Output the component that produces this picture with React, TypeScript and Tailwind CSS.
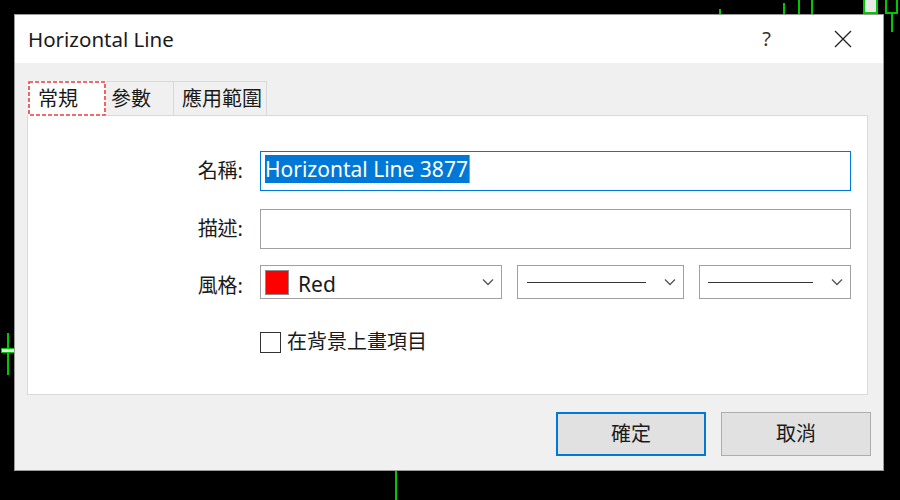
const Chevron = () => (
	<svg width="12" height="8" viewBox="0 0 12 8" className="shrink-0">
		<polyline points="1,1.5 6,6.5 11,1.5" fill="none" stroke="#555" strokeWidth="1.3" />
	</svg>
);

const ChartMarks = () => (
	<>
		{/* top strip */}
		<div className="absolute left-[719px] top-[9px] w-[2px] h-[6px] bg-[#00c800]" />
		<div className="absolute left-[783px] top-[3px] w-[2px] h-[12px] bg-[#00c800]" />
		<div className="absolute left-[798px] top-0 w-[2px] h-[15px] bg-[#00c800]" />
		<div className="absolute left-[811px] top-0 w-[2px] h-[15px] bg-[#00c800]" />
		<div className="absolute left-[863px] top-0 w-[15px] h-[14px] bg-[#e8e8e8] border-2 border-t-0 border-[#00c800]" />
		<div className="absolute left-[885px] top-0 w-[13px] h-[14px] border-2 border-t-0 border-[#00c800]" />
		<div className="absolute left-[891px] top-[13px] w-[2px] h-[19px] bg-[#00c800]" />
		{/* left crosshair */}
		<div className="absolute left-[7px] top-[333px] w-[2px] h-[42px] bg-[#00c800]" />
		<div className="absolute left-[1px] top-[348px] w-[15px] h-[5px] bg-[#e8e8e8] border border-[#00c800]" />
		{/* bottom */}
		<div className="absolute left-[395px] top-[469px] w-[2px] h-[31px] bg-[#00c800]" />
	</>
);

const tabs = [
	{ label: "參數", w: "w-[69px]", pl: "pl-[5px]" },
	{ label: "應用範圍", w: "w-[94px]", pl: "pl-[8px]" },
];

export default function App() {
	return (
		<div className="relative w-[900px] h-[500px] bg-black overflow-hidden font-['Noto_Sans','Noto_Sans_CJK_TC',sans-serif] text-[#1a1a1a]">
			<ChartMarks />

			{/* dialog window */}
			<div className="absolute left-[14px] top-[14px] w-[870px] h-[457px] border border-[#9a9a9a] bg-[#f0f0f0] flex flex-col">
				{/* title bar */}
				<div className="h-[48px] bg-white flex items-center shrink-0">
					<span className="ml-[13px] text-[20.5px] leading-none">Horizontal Line</span>
					<span className="ml-auto mr-[63px] text-[20px] leading-none text-[#333]">?</span>
					<svg width="18" height="18" viewBox="0 0 18 18" className="mr-[31px]">
						<path d="M1 1 L17 17 M17 1 L1 17" stroke="#222" strokeWidth="1.3" />
					</svg>
				</div>

				{/* tabs */}
				<div className="flex items-end h-[35px] mt-[17px] ml-[13px]">
					<div className="relative z-10 w-[78px] h-[35px] bg-white -mb-px flex items-center pl-[10px] text-[20px]">
						常規
						<svg width="78" height="35" className="absolute left-0 top-0">
							<rect x="1" y="1" width="76" height="33" fill="none" stroke="#f03c3c" strokeWidth="1.6" strokeDasharray="4 2" />
						</svg>
					</div>
					{tabs.map((t) => (
						<div
							key={t.label}
							className={`${t.w} ${t.pl} h-[34px] border border-b-0 border-[#d9d9d9] -ml-px flex items-center text-[20px]`}>
							{t.label}
						</div>
					))}
				</div>

				{/* tab panel */}
				<div className="ml-[12px] w-[841px] h-[280px] bg-white border border-[#d9d9d9] pt-[35px] pr-[16px] flex flex-col text-[20px]">
					<div className="flex items-center h-[40px]">
						<span className="w-[215px] text-right">名稱:</span>
						<div className="ml-[17px] flex-1 h-[40px] border border-[#0078d7] flex items-start pt-[3px] pl-[4px]">
							<span className="bg-[#0078d7] text-white text-[21px] h-[28px] leading-[28px] pr-[1px] border-r border-[#e08a3c]">
								Horizontal Line 3877
							</span>
						</div>
					</div>

					<div className="flex items-center h-[40px] mt-[18px]">
						<span className="w-[215px] text-right">描述:</span>
						<div className="ml-[17px] flex-1 h-[40px] border border-[#a0a0a0]" />
					</div>

					<div className="flex items-center h-[34px] mt-[16px]">
						<span className="w-[215px] text-right pt-[8px]">風格:</span>
						<div className="ml-[17px] w-[242px] h-[34px] border border-[#a0a0a0] flex items-center pl-[4px] pr-[7px]">
							<span className="w-[24px] h-[25px] bg-[#ff0000] border border-[#8c8c8c]" />
							<span className="ml-[9px] text-[21px] pt-[5px]">Red</span>
							<span className="ml-auto">
								<Chevron />
							</span>
						</div>
						<div className="ml-[15px] w-[167px] h-[34px] border border-[#a0a0a0] flex items-center pl-[9px] pr-[7px]">
							<span className="w-[119px] h-px bg-[#333]" />
							<span className="ml-auto">
								<Chevron />
							</span>
						</div>
						<div className="ml-[15px] w-[152px] h-[34px] border border-[#a0a0a0] flex items-center pl-[8px] pr-[7px]">
							<span className="w-[105px] h-px bg-[#333]" />
							<span className="ml-auto">
								<Chevron />
							</span>
						</div>
					</div>

					<div className="flex items-center mt-[28px] ml-[232px]">
						<span className="w-[21px] h-[21px] border border-[#333] bg-white" />
						<span className="ml-[6px]">在背景上畫項目</span>
					</div>
				</div>

				{/* buttons */}
				<div className="flex justify-end gap-[15px] mt-[17px] mr-[12px] text-[20px]">
					<button className="w-[150px] h-[44px] bg-[#e1e1e1] border-2 border-[#0078d7] flex items-center justify-center">
						確定
					</button>
					<button className="w-[150px] h-[44px] bg-[#e1e1e1] border border-[#adadad] flex items-center justify-center">
						取消
					</button>
				</div>
			</div>
		</div>
	);
}
